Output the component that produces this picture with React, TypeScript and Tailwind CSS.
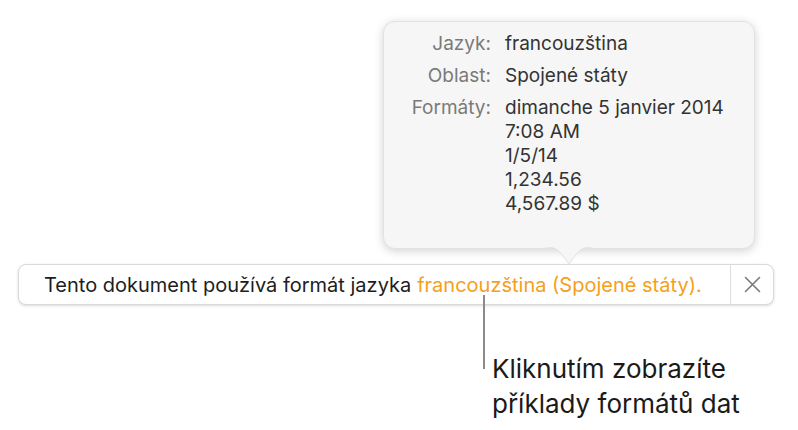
import React from 'react';

const font = { fontFamily: 'Inter, "Noto Sans", sans-serif' };

const rows: { label: string; values: string[] }[] = [
  { label: 'Jazyk:', values: ['francouzština'] },
  { label: 'Oblast:', values: ['Spojené státy'] },
  {
    label: 'Formáty:',
    values: ['dimanche 5 janvier 2014', '7:08 AM', '1/5/14', '1,234.56', '4,567.89 $'],
  },
];

const Popover: React.FC = () => (
  <div className="absolute left-[383px] top-[21px] w-[372px] h-[228px]">
    <div className="h-full rounded-[12px] bg-[#f6f6f6] border border-[#e2e2e2] shadow-[0_2px_10px_rgba(0,0,0,0.18)] pt-[10px]">
      <div className="flex flex-col gap-[8px]">
        {rows.map((row) => (
          <div key={row.label} className="flex text-[19px] leading-[24px]">
            <div className="w-[107px] text-right text-[#7a7a7a]">{row.label}</div>
            <div className="pl-[14px] text-[#333333] flex flex-col">
              {row.values.map((v) => (
                <span key={v}>{v}</span>
              ))}
            </div>
          </div>
        ))}
      </div>
    </div>
    {/* arrow */}
    <svg
      className="absolute left-[162px] top-[226px]"
      width="48"
      height="20"
      viewBox="0 0 48 20"
    >
      <path d="M0 0 C9 0 13 2 18 9 L24 17 L30 9 C35 2 39 0 48 0 Z" fill="#f6f6f6" />
      <path d="M0 0 C9 0 13 2 18 9 L24 17 L30 9 C35 2 39 0 48 0" fill="none" stroke="#e2e2e2" strokeWidth="1" />
    </svg>
  </div>
);

export default function App() {
  return (
    <div className="relative w-[798px] h-[430px] bg-white overflow-hidden" style={font}>
      <div className="pt-[264px] pl-[18px]">
        <div className="flex w-[756px] h-[41px] rounded-[8px] bg-white border border-[#d9d9d9] shadow-[0_1px_3px_rgba(0,0,0,0.15)]">
          <div className="flex-1 flex items-center pl-[25px] text-[20px] text-[#1d1d1d] whitespace-nowrap">
            Tento dokument používá formát jazyka{' '}
            <span className="ml-[6px] text-[#f5a01a]">francouzština (Spojené státy).</span>
          </div>
          <div className="w-[43px] border-l border-[#dedede] flex items-center justify-center">
            <svg width="17" height="17" viewBox="0 0 17 17">
              <path d="M1.5 1.5 L15.5 15.5 M15.5 1.5 L1.5 15.5" stroke="#7a7a7a" strokeWidth="1.6" strokeLinecap="round" />
            </svg>
          </div>
        </div>
        <div className="flex pl-[465px] -mt-[10px]">
          <div className="w-[2px] h-[74px] bg-[#8a8a8a]" />
          <div className="pl-[7px] pt-[56px] text-[26px] leading-[35px] text-[#1a1a1a]">
            Kliknutím zobrazíte
            <br />
            příklady formátů dat
          </div>
        </div>
      </div>
      <Popover />
    </div>
  );
}
